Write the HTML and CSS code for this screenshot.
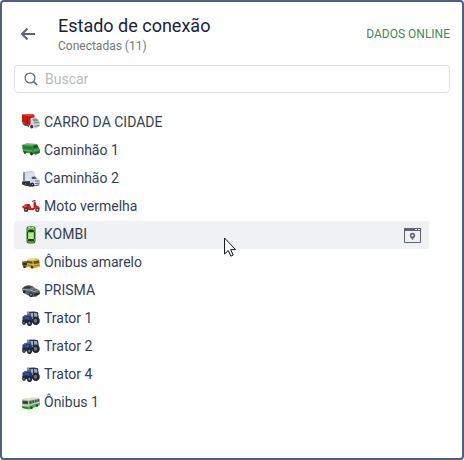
FILE: index.html
```
<!DOCTYPE html>
<html lang="pt">
<head>
<meta charset="utf-8">
<meta name="viewport" content="width=device-width, initial-scale=1">
<title>Estado de conexão</title>
<link rel="stylesheet" href="styles.css">
</head>
<body>
<svg class="sprite" aria-hidden="true">
  <symbol id="tractor" viewBox="0 0 18 18">
    <path d="M7 1.800l5-.3 4 .8.800 5.500H8z" fill="#2c3644"/>
    <path d="M8.500 3h2.500v4H9zM12 3l3 .3.500 3.500-3.200.4z" fill="#9fb0c0"/>
    <path d="M.5 7L3 5l5-.5 2 3v4.500L5 13 .5 11z" fill="#22397a"/>
    <path d="M1.500 6.500l3-1 3.500-.2M3 8h4" stroke="#4a70bd" fill="none"/>
    <path d="M6 1.500v4" stroke="#24272c"/>
    <path d="M0 10l8 .5v3L2 13z" fill="#2b2e35"/>
    <ellipse cx="13.800" cy="10.800" rx="4" ry="4.300" fill="#23262b"/>
    <ellipse cx="13.500" cy="10.800" rx="1.700" ry="2" fill="#6a747e"/>
    <ellipse cx="7.500" cy="13" rx="2.500" ry="3" fill="#1c1f24"/>
    <ellipse cx="7.300" cy="13" rx="1" ry="1.300" fill="#8b9298"/>
    <ellipse cx="2" cy="12.600" rx="1.900" ry="2.300" fill="#24272c"/>
    <path d="M2 12v1.500" stroke="#8b9298"/>
  </symbol>
</svg>
<main class="panel">
  <header class="header">
    <button class="back" type="button" aria-label="Voltar">
      <svg width="16" height="14" viewBox="0 0 16 14"><path d="M7.500 1.500L2 7l5.500 5.500M2 7h13" fill="none" stroke="currentColor" stroke-width="2"/></svg>
    </button>
    <div class="heading">
      <h1 class="title">Estado de conexão</h1>
      <p class="subtitle">Conectadas (11)</p>
    </div>
    <a class="online" href="#">DADOS ONLINE</a>
  </header>
  <label class="search">
    <svg width="14" height="14" viewBox="0 0 14 14" aria-hidden="true"><circle cx="6" cy="6" r="4.900" fill="none" stroke="#5f6678" stroke-width="1.200"/><path d="M9.600 9.600l3.600 3.400" stroke="#5f6678" stroke-width="1.500"/></svg>
    <input class="search-input" type="search" placeholder="Buscar" aria-label="Buscar">
  </label>
  <ul class="units">
    <li class="unit">
      <svg class="icon" viewBox="0 0 18 18" aria-hidden="true">
        <path d="M0 .4L11 0l1.500 1.500v9L7 11.500 0 8z" fill="#c91913"/>
        <path d="M0 .4L11 0l1.500 1.500L5.500 2z" fill="#ef4a38"/>
        <path d="M5.500 2v9" stroke="#98100e"/>
        <path d="M0 8l7 2.500v2.500L1 10.500z" fill="#555b5c"/>
        <path d="M8.500 4l5-.8 3 2.500L18 9l-.5 3.500-4 2-5-1.500z" fill="#d0d4d4"/>
        <path d="M10.500 5l4.200-.6 1.700 2.500-4.700.5z" fill="#7e8d96"/>
        <path d="M12 9.200l5.200-1M12.500 12.500l4.800-1.200" stroke="#6d7375"/>
        <ellipse cx="9.700" cy="12.800" rx="1.600" ry="1.700" fill="#343638"/>
        <ellipse cx="3.500" cy="10.800" rx="1.200" ry="1.200" fill="#454849"/>
      </svg>
      <span class="name">CARRO DA CIDADE</span>
    </li>
    <li class="unit">
      <svg class="icon" viewBox="0 0 18 18" aria-hidden="true">
        <path d="M0 3l5-1.600L15 2l1.500 3L18 7.500v3.500l-4.500 1.700L1 10z" fill="#318f38"/>
        <path d="M0 3l5-1.600L15 2l-4.500 1.500z" fill="#6dbc62"/>
        <path d="M11 4.100l4-1.200 1.200 2.700-4.300 1z" fill="#294e47"/>
        <path d="M1 4.500l8.500.8v2L1 6.300z" fill="#29733a"/>
        <path d="M1.500 8l9 1M12 8.500l5.500-1" stroke="#60b45c"/>
        <path d="M12.300 11l5-1.200" stroke="#344e3c" stroke-width="1.200"/>
        <ellipse cx="9.500" cy="11.800" rx="1.500" ry="1.600" fill="#263a2c"/>
        <ellipse cx="3" cy="10.600" rx="1.300" ry="1.300" fill="#304135"/>
      </svg>
      <span class="name">Caminhão 1</span>
    </li>
    <li class="unit">
      <svg class="icon" viewBox="0 0 18 18" aria-hidden="true">
        <path d="M1 2l8-1 3.500.8v10.700H1z" fill="#c3cad8"/>
        <path d="M3.500 2.700l8.500-.4v9H3.500z" fill="#dde1ea"/>
        <path d="M1 2.200h2v9H1z" fill="#8891a3"/>
        <path d="M0 11.500l9-.5 8.500 2-.5 2.500-9 1.200L0 14.500z" fill="#343743"/>
        <path d="M8.500 6.200l4.700-.8 2.500 3 2.300 1.800v4L13 15.500 8 13z" fill="#d3d9e8"/>
        <path d="M9.500 7l3.400-.5 2 2.200-4.700.4z" fill="#4b5368"/>
        <path d="M13 11h4.500M13 13.600l4.500-.4" stroke="#6a728a"/>
        <ellipse cx="10.400" cy="14.500" rx="1.700" ry="2" fill="#222733"/>
        <ellipse cx="3.500" cy="14" rx="1.500" ry="1.800" fill="#222733"/>
        <path d="M3.500 13.500v1M10.400 14v1" stroke="#a7adba"/>
      </svg>
      <span class="name">Caminhão 2</span>
    </li>
    <li class="unit">
      <svg class="icon" viewBox="0 0 18 18" aria-hidden="true">
        <path d="M10 3.500l3-1.200.8 1" fill="none" stroke="#4f3c40"/>
        <path d="M0 8.500l4-2 4 .5 1.500 3h2L11.500 4l1.800-.7 1.200 4.200 2.500 2-.5 1.500-3-1L12 12H5.500L4.500 10 1 10.500z" fill="#dd1719"/>
        <path d="M2 6.700l5-.8 1.500 1L4 7.700z" fill="#4b292c"/>
        <path d="M2 8.600l3-.7" stroke="#fb746c"/>
        <circle cx="4" cy="11.700" r="2.200" fill="#332d30"/>
        <circle cx="4" cy="11.700" r=".9" fill="#a6a6a9"/>
        <circle cx="15.300" cy="11.800" r="2.200" fill="#393336"/>
        <circle cx="15.300" cy="11.800" r="1" fill="#b8b5b8"/>
        <path d="M13 9.700l3-1 1.800 2" stroke="#e02020" stroke-width="1.200" fill="none"/>
      </svg>
      <span class="name">Moto vermelha</span>
    </li>
    <li class="unit unit-active">
      <svg class="icon" viewBox="0 0 18 18" aria-hidden="true">
        <rect x="4.500" y=".3" width="9" height="17.200" rx="2.500" fill="#2f6e20"/>
        <rect x="5.500" y="1" width="7" height="15.500" rx="2" fill="#7ccb4e"/>
        <path d="M5.600 4.500Q9 2.500 12.400 4.500L11.500 6.500h-5z" fill="#1d3421"/>
        <path d="M6.500 6.500h5v6.500h-5z" fill="#b3ea8c"/>
        <path d="M6.300 13h5.400l.5 2q-3 1-6.400 0z" fill="#233c22"/>
        <path d="M5.500 6v7M12.500 6v7" stroke="#234a20"/>
        <path d="M6.500 1.300h1.500M10 1.300h1.500" stroke="#e9ffd4"/>
        <path d="M5.500 16.300h1.500M11 16.300h1.500" stroke="#8c5a2b"/>
      </svg>
      <span class="name">KOMBI</span>
      <button class="action" type="button" aria-label="Mostrar no mapa">
        <svg width="17" height="15" viewBox="0 0 17 15"><path d="M.5.500h16v14H.5z" fill="none" stroke="#5d6575"/><path d="M0 0h17v3H0z" fill="#5d6575"/><path d="M11 1.500h2M14 1.500h2" stroke="#f0f1f3"/><path fill-rule="evenodd" d="M8.500 4.800a2.700 2.700 0 0 1 2.700 2.700c0 1.700-1.700 2.700-2.700 4.700-1-2-2.700-3-2.700-4.700a2.700 2.700 0 0 1 2.700-2.700zM8.500 6.400a1.100 1.100 0 1 0 0 2.200 1.100 1.100 0 0 0 0-2.200z" fill="#5d6575"/></svg>
      </button>
      <svg class="cursor" width="13" height="20" viewBox="0 0 13 20" aria-hidden="true"><path d="M.5 1v16l3.700-3.500 2.600 5.700 2.400-1.100-2.500-5.500h4.900z" fill="#fff" stroke="#17192b"/></svg>
    </li>
    <li class="unit">
      <svg class="icon" viewBox="0 0 18 18" aria-hidden="true">
        <path d="M0 7.500l6-1V13l-3 .7L.5 12z" fill="#9a7625"/>
        <path d="M.7 8.500h6v2.500h-6z" fill="#353431"/>
        <path d="M5 6L8 4.400l8 .2 1.500 1.400.5 6.500-6 2L5 12.500z" fill="#deb132"/>
        <path d="M5 6L8 4.400l8 .2-5 1.700z" fill="#f3dc72"/>
        <path d="M5 7l5.500.5v2.200L5 9zM11.500 7.200l5.500-.7.3 2.800-5.500.8z" fill="#46514e"/>
        <path d="M5.500 11l5 .7M12 12l5.500-.8" stroke="#8f6e1e"/>
        <circle cx="10" cy="13.300" r="1.400" fill="#37342a"/>
        <circle cx="2.500" cy="12.800" r="1.300" fill="#37342a"/>
      </svg>
      <span class="name">Ônibus amarelo</span>
    </li>
    <li class="unit">
      <svg class="icon" viewBox="0 0 18 18" aria-hidden="true">
        <path d="M0 6.500Q2 3.500 6 3.200q4.500-.2 7 3l4.500 2 .5 3.500-4 3-5 .2L1 10.500z" fill="#5a5f65"/>
        <path d="M2 5.200Q6 3.200 10 5L7.500 6.500 1.500 6.400z" fill="#343941"/>
        <path d="M8.200 6.600L10.500 5l3 1.700-3 1z" fill="#78818a"/>
        <path d="M1 7.500l7 .5 4 1.500 4.500-1" stroke="#a9adb3" fill="none"/>
        <path d="M11.500 12l6-1.500v1.700l-5 1.800z" fill="#24272c"/>
        <ellipse cx="9" cy="12.700" rx="1.800" ry="2.200" fill="#202226"/>
        <ellipse cx="2.200" cy="9.800" rx="1.200" ry="1.700" fill="#292b30"/>
        <ellipse cx="9" cy="12.700" rx=".8" ry="1.100" fill="#999ea3"/>
      </svg>
      <span class="name">PRISMA</span>
    </li>
    <li class="unit"><svg class="icon" aria-hidden="true"><use href="#tractor"/></svg><span class="name">Trator 1</span></li>
    <li class="unit"><svg class="icon" aria-hidden="true"><use href="#tractor"/></svg><span class="name">Trator 2</span></li>
    <li class="unit"><svg class="icon" aria-hidden="true"><use href="#tractor"/></svg><span class="name">Trator 4</span></li>
    <li class="unit">
      <svg class="icon" viewBox="0 0 18 18" aria-hidden="true">
        <path d="M0 5l11-1.500 6.500.5.5 5.500L7.500 15.500 0 14z" fill="#c6ccb9"/>
        <path d="M0 5l11-1.500 6.500.5L7 6z" fill="#dfe3cf"/>
        <path d="M.5 6.500l5.500.4v3.300L.5 9.800z" fill="#344840"/>
        <path d="M7.300 7L17.300 5v2.500L7.300 10.200z" fill="#3d554c"/>
        <path d="M10 6.500v3M12.500 6v3M15 5.500v3" stroke="#c2d0bc" stroke-width=".6"/>
        <path d="M7 12L18 8.800v2.200L7 15.500zM0 12l7 .7v2.800L0 14z" fill="#38bd35"/>
        <path d="M1 13.500l5 .8" stroke="#30533a"/>
        <circle cx="9.500" cy="13.800" r="1.300" fill="#2b352c"/>
        <circle cx="15" cy="11.500" r="1.200" fill="#2b352c"/>
      </svg>
      <span class="name">Ônibus 1</span>
    </li>
  </ul>
</main>
</body>
</html>
```
FILE: styles.css
```
* {
  box-sizing: border-box;
}

body {
  margin: 0;
  background: #fff;
  color: #343f55;
  font: 14px/20px Roboto, "Liberation Sans", sans-serif;
}

button {
  padding: 0;
  border: 0;
  background: none;
  cursor: pointer;
}

svg {
  display: block;
}

.sprite {
  position: absolute;
  width: 0;
  height: 0;
}

.panel {
  min-height: 100vh;
  padding: 12px;
  border: 2px solid #50618a;
  border-color: #506083;
  border-radius: 4px;
}

.header {
  display: flex;
  align-items: center;
  height: 40px;
}

.back {
  width: 44px;
  padding-left: 6px;
  color: #5d6575;
}

.heading {
  flex: 1;
}

.title {
  margin: 0;
  color: #17213d;
  font-size: 18px;
  font-weight: 400;
  line-height: 24px;
}

.subtitle {
  margin: 0;
  color: #74777c;
  font-size: 12px;
  line-height: 16px;
}

.online {
  color: #3c8c50;
  font-size: 12px;
  text-decoration: none;
}

.search {
  display: flex;
  align-items: center;
  gap: 7px;
  height: 28px;
  margin-top: 11px;
  padding: 0 9px;
  border: 1px solid #dfe0e2;
  border-radius: 4px;
}

.search-input {
  flex: 1;
  min-width: 0;
  padding: 0;
  border: 0;
  outline: 0;
  background: none;
  color: inherit;
  font: inherit;
}

.search-input::placeholder {
  color: #b9bbbf;
  opacity: 1;
}

.units {
  margin: 16px 21px 0 0;
  padding: 0;
  list-style: none;
}

.unit {
  position: relative;
  display: flex;
  align-items: center;
  gap: 4px;
  height: 28px;
  padding: 0 8px;
  border-radius: 2px;
}

.unit-active {
  background: #f0f1f3;
}

.icon {
  flex: none;
  width: 18px;
  height: 18px;
}

.name {
  flex: 1;
  padding-bottom: 2px;
}

.cursor {
  position: absolute;
  top: 16px;
  left: 210px;
}
```
